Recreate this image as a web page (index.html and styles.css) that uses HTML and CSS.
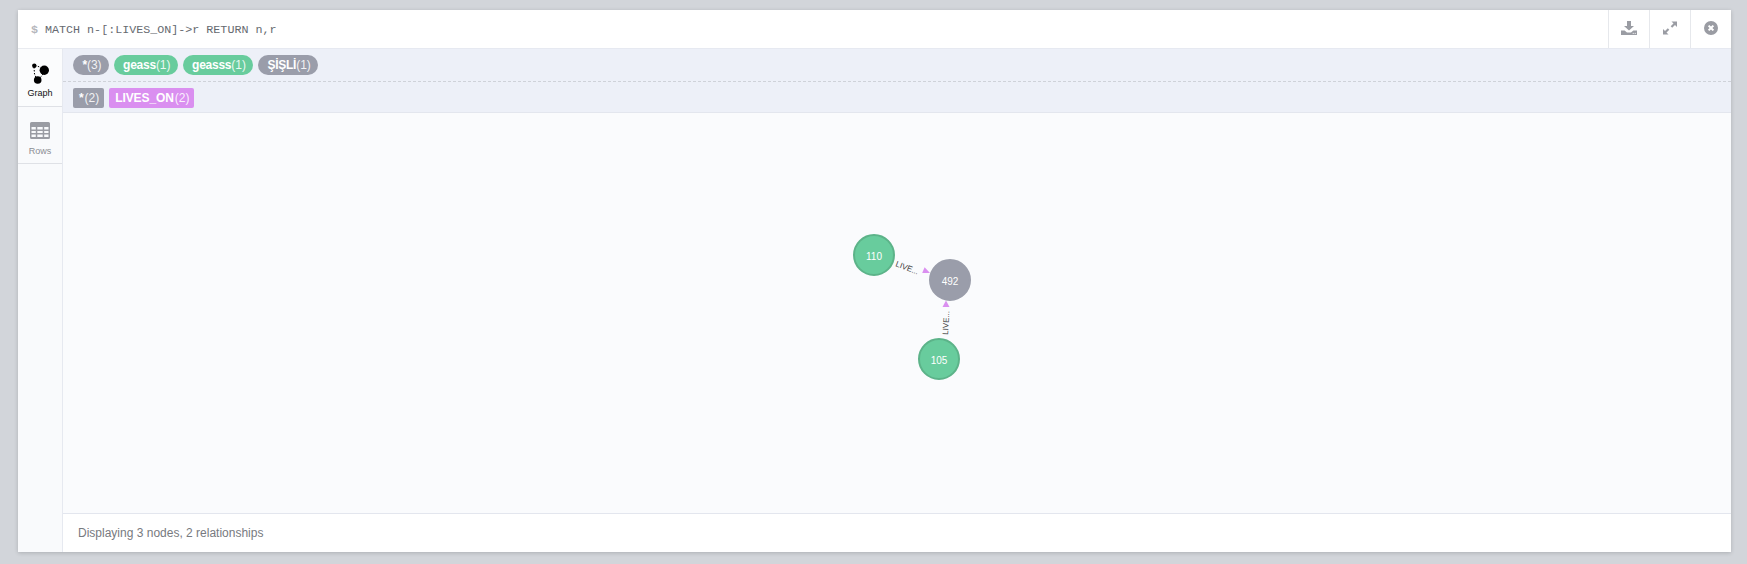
FILE: index.html
```html
<!DOCTYPE html>
<html lang="en">
<head>
<meta charset="utf-8">
<title>Neo4j frame</title>
<link rel="stylesheet" href="styles.css">
</head>
<body>
<main class="frame">
  <header class="head">
    <div class="query"><span class="prompt">$</span> MATCH n-[:LIVES_ON]-&gt;r RETURN n,r</div>
    <button class="act">
      <svg class="ico" viewBox="0 0 16 16"><path d="M6 1h4v5h3l-5 4.500L3 6h3zM0 10.500h3.600L6 12.600h4l2.400-2.100H16V15H0z"/><circle cx="12.200" cy="13.300" r=".6" fill="#fff"/><circle cx="14.200" cy="13.300" r=".6" fill="#fff"/></svg>
    </button>
    <button class="act">
      <svg class="ico" viewBox="0 0 16 16"><path d="M9.500 1.500H15V7l-2-2-2.800 2.800-1.500-1.500L11.500 3.500zM6.500 14.500H1V9l2 2 2.800-2.800 1.500 1.500L4.500 12.500z"/></svg>
    </button>
    <button class="act">
      <svg class="ico" viewBox="0 0 16 16"><path fill-rule="evenodd" d="M8 1a7 7 0 1 0 0 14A7 7 0 0 0 8 1zM4.900 6.300 6.300 4.900 8 6.600l1.700-1.700 1.400 1.400L9.400 8l1.700 1.700-1.400 1.400L8 9.400l-1.700 1.700-1.400-1.400L6.600 8z"/></svg>
    </button>
  </header>
  <div class="body">
    <nav class="side">
      <div class="tab tab-on">
        <svg class="tab-ico" viewBox="0 0 20 24"><path class="dash" d="M5 3.300 11 5.500M4 5l.5 7 1.500 3.500M13 12l-3 4"/><circle cx="4.300" cy="3.700" r="2.200"/><circle cx="14.300" cy="8.300" r="4.700"/><circle cx="7.700" cy="18" r="3.800"/></svg>
        <span class="tab-label">Graph</span>
      </div>
      <div class="tab tab-rows">
        <svg class="grid-ico" viewBox="0 0 20 17"><path fill-rule="evenodd" d="M1.500 0h17A1.500 1.500 0 0 1 20 1.500v14a1.500 1.500 0 0 1-1.500 1.500h-17A1.500 1.500 0 0 1 0 15.500v-14A1.500 1.500 0 0 1 1.500 0zM1.500 5v2.500h4.300V5zM7.300 5v2.500h5.400V5zM14.200 5v2.500h4.300V5zM1.500 9v2h4.300V9zM7.300 9v2h5.400V9zM14.200 9v2h4.300V9zM1.500 12.500V15h4.300v-2.500zM7.300 12.500V15h5.400v-2.500zM14.200 12.500V15h4.300v-2.500z"/></svg>
        <span class="tab-label">Rows</span>
      </div>
    </nav>
    <div class="content">
      <div class="legend legend-nodes">
        <span class="pill grey"><b>*</b>(3)</span>
        <span class="pill green"><b>geass</b>(1)</span>
        <span class="pill green"><b>geasss</b>(1)</span>
        <span class="pill grey"><b>ŞİŞLİ</b>(1)</span>
      </div>
      <div class="legend legend-rels">
        <span class="pill rect grey"><b>*</b>(2)</span>
        <span class="pill rect pink"><b>LIVES_ON</b>(2)</span>
      </div>
      <div class="graph">
        <svg class="canvas">
          <path class="arrow" d="M867 160l-7.800-.100 2.400-5.700z"/>
          <path class="arrow" d="M883 187.500l3.500 6.500h-7z"/>
          <text class="rel-t" transform="translate(832 153) rotate(21)">LIVE...</text>
          <text class="rel-t" transform="translate(885 222) rotate(-87)">LIVE...</text>
          <circle class="node n-green" cx="811" cy="142" r="20"/>
          <circle class="node n-grey" cx="887" cy="167" r="20"/>
          <circle class="node n-green" cx="876" cy="246" r="20"/>
          <text class="node-t" x="811" y="147">110</text>
          <text class="node-t" x="887" y="172">492</text>
          <text class="node-t" x="876" y="251">105</text>
        </svg>
      </div>
      <footer class="foot">Displaying 3 nodes, 2 relationships</footer>
    </div>
  </div>
</main>
</body>
</html>
```
FILE: styles.css
```css
* { box-sizing: border-box; }
html, body { margin: 0; height: 100%; }
body {
  background: #d2d5da;
  padding: 10px 16px 12px 18px;
  font-family: "Liberation Sans", Arial, sans-serif;
  overflow: hidden;
}
.frame {
  height: 542px;
  background: #fff;
  display: flex;
  flex-direction: column;
  box-shadow: 0 1px 4px rgba(0, 0, 0, .18);
}
.head {
  height: 38px;
  display: flex;
  align-items: stretch;
  flex: none;
}
.query {
  flex: 1;
  padding: 0 0 0 13px;
  font: 11.7px/40px "Liberation Mono", "Courier New", monospace;
  color: #666a70;
}
.prompt { color: #b4b6bb; font-weight: bold; }
.act {
  width: 41px;
  border: 0;
  border-left: 1px solid #e6e8ec;
  background: #fff;
  padding: 0 0 2px;
  display: flex;
  align-items: center;
  justify-content: center;
}
.ico { width: 16px; height: 16px; fill: #9a9ca3; }
.body { flex: 1; display: flex; min-height: 0; }
.side {
  width: 45px;
  flex: none;
  background: #f9fafc;
  border-right: 1px solid #e6e9f0;
  border-top: 1px solid #e9ebf0;
}
.tab {
  display: flex;
  flex-direction: column;
  align-items: center;
  border-bottom: 1px solid #dfe1e6;
}
.tab-on { height: 58px; padding-top: 13px; background: #fbfcfd; }
.tab-rows { height: 57px; padding-top: 15px; }
.tab-ico { width: 20px; height: 24px; display: block; fill: #000; }
.grid-ico { width: 20px; height: 17px; display: block; fill: #9a9ca3; }
.dash { fill: none; stroke: #000; stroke-width: 1; stroke-dasharray: 1.500 1.500; }
.tab-label { font-size: 9px; line-height: 12px; color: #8b8d93; }
.tab-on .tab-label { color: #111; margin-top: 1px; }
.tab-rows .tab-label { margin-top: 6px; }
.content { flex: 1; display: flex; flex-direction: column; min-width: 0; }
.legend {
  background: #edf0f8;
  display: flex;
  align-items: flex-start;
  gap: 5px;
  padding-left: 10px;
  flex: none;
}
.legend-nodes { height: 34px; padding-top: 6px; border-top: 1px solid #e6e9f1; border-bottom: 1px dashed #cfd2d9; }
.legend-rels { height: 31px; padding-top: 6px; border-bottom: 1px solid #e3e6ee; }
.pill {
  height: 20px;
  line-height: 20px;
  padding: 0 7px 0 9.500px;
  font-size: 12px;
  color: rgba(255, 255, 255, .88);
  border-radius: 10px;
  white-space: nowrap;
}
.pill b { font-weight: bold; color: #fff; letter-spacing: -.25px; }
.rect { border-radius: 2px; padding: 0 5px 0 6px; }
.rect b { letter-spacing: -.1px; margin-right: 1px; }
.grey { background: #9a9daa; }
.green { background: #68cc9d; }
.pink { background: #da8ff0; }
.graph { flex: 1; min-height: 0; background: #fafbfd; }
.canvas { width: 100%; height: 100%; display: block; }
.arrow { fill: #da8ff0; }
.rel-t { font-size: 8px; fill: #444; font-family: "Liberation Sans", Arial, sans-serif; }
.node { stroke-width: 2; }
.n-green { fill: #68cc9d; stroke: #5cb389; }
.n-grey { fill: #9a9daa; stroke: #9a9daa; }
.node-t { font-size: 10px; fill: #fff; text-anchor: middle; }
.foot {
  height: 39px;
  flex: none;
  background: #fff;
  border-top: 1px solid #e3e6ee;
  padding-left: 15px;
  font-size: 12px;
  line-height: 38px;
  color: #777a80;
}
```
